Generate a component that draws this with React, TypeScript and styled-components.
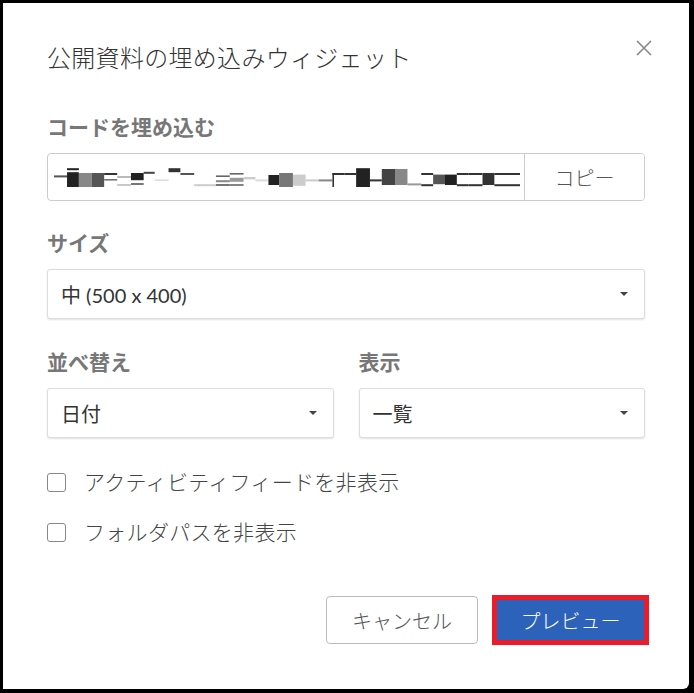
import React from "react";
import styled, { createGlobalStyle } from "styled-components";

const GlobalStyle = createGlobalStyle`
  html, body {
    margin: 0;
    padding: 0;
    background: #000;
  }
  body {
    font-family: Lato, "Noto Sans CJK JP", sans-serif;
  }
`;

const Frame = styled.div`
  width: 694px;
  height: 693px;
  box-sizing: border-box;
  border-style: solid;
  border-color: #000;
  border-width: 3px 5px 4px 3px;
  background: #000;
`;

const Dialog = styled.div`
  height: 100%;
  box-sizing: border-box;
  background: #fff;
  border-radius: 0 0 6px 0;
  padding: 36px 44px 0 44px;
  display: flex;
  flex-direction: column;
`;

const Header = styled.div`
  display: flex;
  justify-content: space-between;
  align-items: flex-start;
`;

const Title = styled.h2`
  margin: 0;
  padding-top: 2px;
  font-size: 24px;
  font-weight: 300;
  letter-spacing: 0.3px;
  color: #333;
  line-height: 34px;
`;

const Close = styled.button`
  border: none;
  background: none;
  padding: 0;
  margin-right: -8px;
  width: 18px;
  height: 18px;
  display: flex;
  cursor: pointer;
`;

const Label = styled.div`
  font-size: 21px;
  font-weight: 700;
  color: #777;
  line-height: 28px;
  margin-bottom: 12px;
`;

const Section = styled.div<{ $top: number }>`
  margin-top: ${(p) => p.$top}px;
`;

const CodeBox = styled.div`
  display: flex;
  height: 48px;
  box-sizing: border-box;
  border: 1px solid #ccc;
  border-radius: 4px;
  overflow: hidden;
`;

const CodeText = styled.div`
  flex: 1;
  display: flex;
  align-items: center;
  padding-left: 6px;
  overflow: hidden;
`;

const CopyButton = styled.button`
  width: 120px;
  border: none;
  border-left: 1px solid #ccc;
  background: #fff;
  font-family: inherit;
  font-size: 20px;
  font-weight: 300;
  color: #555;
  cursor: pointer;
`;

const Select = styled.div`
  height: 50px;
  box-sizing: border-box;
  border: 1px solid #ddd;
  border-radius: 3px;
  box-shadow: 0 1px 2px rgba(0, 0, 0, 0.12);
  display: flex;
  align-items: center;
  justify-content: space-between;
  padding: 0 16px 0 13px;
  font-size: 20px;
  color: #333;
  background: #fff;
`;

const Caret = styled.span`
  width: 0;
  height: 0;
  border-left: 4px solid transparent;
  border-right: 4px solid transparent;
  border-top: 4px solid #444;
`;

const Columns = styled.div`
  display: grid;
  grid-template-columns: 1fr 1fr;
  column-gap: 25px;
`;

const CheckRow = styled.label<{ $top: number }>`
  display: flex;
  align-items: center;
  gap: 18px;
  margin-top: ${(p) => p.$top}px;
  font-size: 21px;
  font-weight: 300;
  letter-spacing: 0.3px;
  color: #444;
  line-height: 30px;
`;

const Box = styled.span`
  width: 19px;
  height: 19px;
  box-sizing: border-box;
  border: 1px solid #888;
  border-radius: 3px;
  background: #fff;
`;

const Footer = styled.div`
  margin-top: 48px;
  display: flex;
  justify-content: flex-end;
  align-items: center;
  gap: 14px;
  margin-right: -4px;
`;

const Cancel = styled.button`
  width: 152px;
  height: 48px;
  box-sizing: border-box;
  border: 1px solid #bbb;
  border-radius: 4px;
  background: #fff;
  font-family: inherit;
  font-size: 20px;
  font-weight: 300;
  color: #555;
  cursor: pointer;
`;

const Highlight = styled.div`
  border: 5px solid #ea1c2a;
  display: flex;
`;

const Preview = styled.button`
  width: 147px;
  height: 40px;
  border: none;
  background: #2c62b9;
  color: #fff;
  font-family: inherit;
  font-size: 20px;
  font-weight: 300;
  cursor: pointer;
`;

// pixelated (obscured) embed code, in a 1:2.53 drawing grid
const blocks: [number, number, number, number, string][] = [
  [35, 106, 35, 5, "#555"],
  [68, 88, 30, 5, "#222"],
  [68, 98, 30, 37, "#222"],
  [98, 100, 32, 35, "#888"],
  [130, 100, 32, 35, "#555"],
  [162, 100, 33, 5, "#333"],
  [162, 115, 33, 4, "#777"],
  [195, 108, 35, 4, "#aaa"],
  [195, 128, 35, 4, "#bbb"],
  [230, 100, 32, 18, "#222"],
  [230, 125, 32, 5, "#777"],
  [262, 97, 28, 5, "#444"],
  [290, 116, 35, 4, "#ddd"],
  [325, 88, 30, 10, "#333"],
  [355, 100, 35, 5, "#555"],
  [390, 128, 55, 5, "#ccc"],
  [445, 106, 35, 4, "#666"],
  [445, 118, 35, 5, "#888"],
  [445, 128, 35, 4, "#555"],
  [480, 100, 35, 4, "#666"],
  [480, 112, 35, 10, "#999"],
  [480, 128, 35, 4, "#666"],
  [515, 110, 30, 6, "#ccc"],
  [545, 116, 33, 5, "#ddd"],
  [578, 105, 27, 25, "#222"],
  [605, 100, 35, 35, "#777"],
  [640, 104, 32, 28, "#ccc"],
  [672, 116, 33, 5, "#ccc"],
  [705, 116, 35, 5, "#888"],
  [740, 100, 30, 5, "#333"],
  [740, 100, 4, 35, "#333"],
  [770, 100, 30, 5, "#333"],
  [800, 88, 35, 47, "#222"],
  [835, 116, 30, 5, "#333"],
  [865, 90, 35, 40, "#444"],
  [900, 90, 30, 40, "#888"],
  [930, 126, 35, 5, "#999"],
  [965, 100, 30, 5, "#333"],
  [965, 128, 30, 5, "#333"],
  [995, 104, 30, 24, "#555"],
  [1025, 104, 30, 26, "#222"],
  [1055, 100, 30, 5, "#333"],
  [1055, 128, 30, 5, "#333"],
  [1085, 100, 35, 5, "#333"],
  [1085, 128, 35, 5, "#333"],
  [1120, 100, 30, 30, "#333"],
  [1150, 100, 65, 5, "#333"],
  [1150, 128, 65, 5, "#333"],
];

function CodeMosaic() {
  return (
    <svg width="468" height="24" viewBox="35 80 1185 60" preserveAspectRatio="none">
      {blocks.map(([x, y, w, h, c], i) => (
        <rect key={i} x={x} y={y} width={w} height={h} fill={c} />
      ))}
    </svg>
  );
}

function Dropdown({ value }: { value: string }) {
  return (
    <Select>
      <span>{value}</span>
      <Caret />
    </Select>
  );
}

export default function App() {
  return (
    <>
      <GlobalStyle />
      <Frame>
        <Dialog>
          <Header>
            <Title>公開資料の埋め込みウィジェット</Title>
            <Close aria-label="閉じる">
              <svg width="18" height="18" viewBox="0 0 18 18">
                <path
                  d="M2 2 L16 16 M16 2 L2 16"
                  stroke="#888"
                  strokeWidth="1.6"
                  fill="none"
                />
              </svg>
            </Close>
          </Header>

          <Section $top={38}>
            <Label>コードを埋め込む</Label>
            <CodeBox>
              <CodeText>
                <CodeMosaic />
              </CodeText>
              <CopyButton>コピー</CopyButton>
            </CodeBox>
          </Section>

          <Section $top={28}>
            <Label>サイズ</Label>
            <Dropdown value="中 (500 x 400)" />
          </Section>

          <Section $top={29}>
            <Columns>
              <div>
                <Label>並べ替え</Label>
                <Dropdown value="日付" />
              </div>
              <div>
                <Label>表示</Label>
                <Dropdown value="一覧" />
              </div>
            </Columns>
          </Section>

          <CheckRow $top={29}>
            <Box />
            アクティビティフィードを非表示
          </CheckRow>
          <CheckRow $top={20}>
            <Box />
            フォルダパスを非表示
          </CheckRow>

          <Footer>
            <Cancel>キャンセル</Cancel>
            <Highlight>
              <Preview>プレビュー</Preview>
            </Highlight>
          </Footer>
        </Dialog>
      </Frame>
    </>
  );
}
